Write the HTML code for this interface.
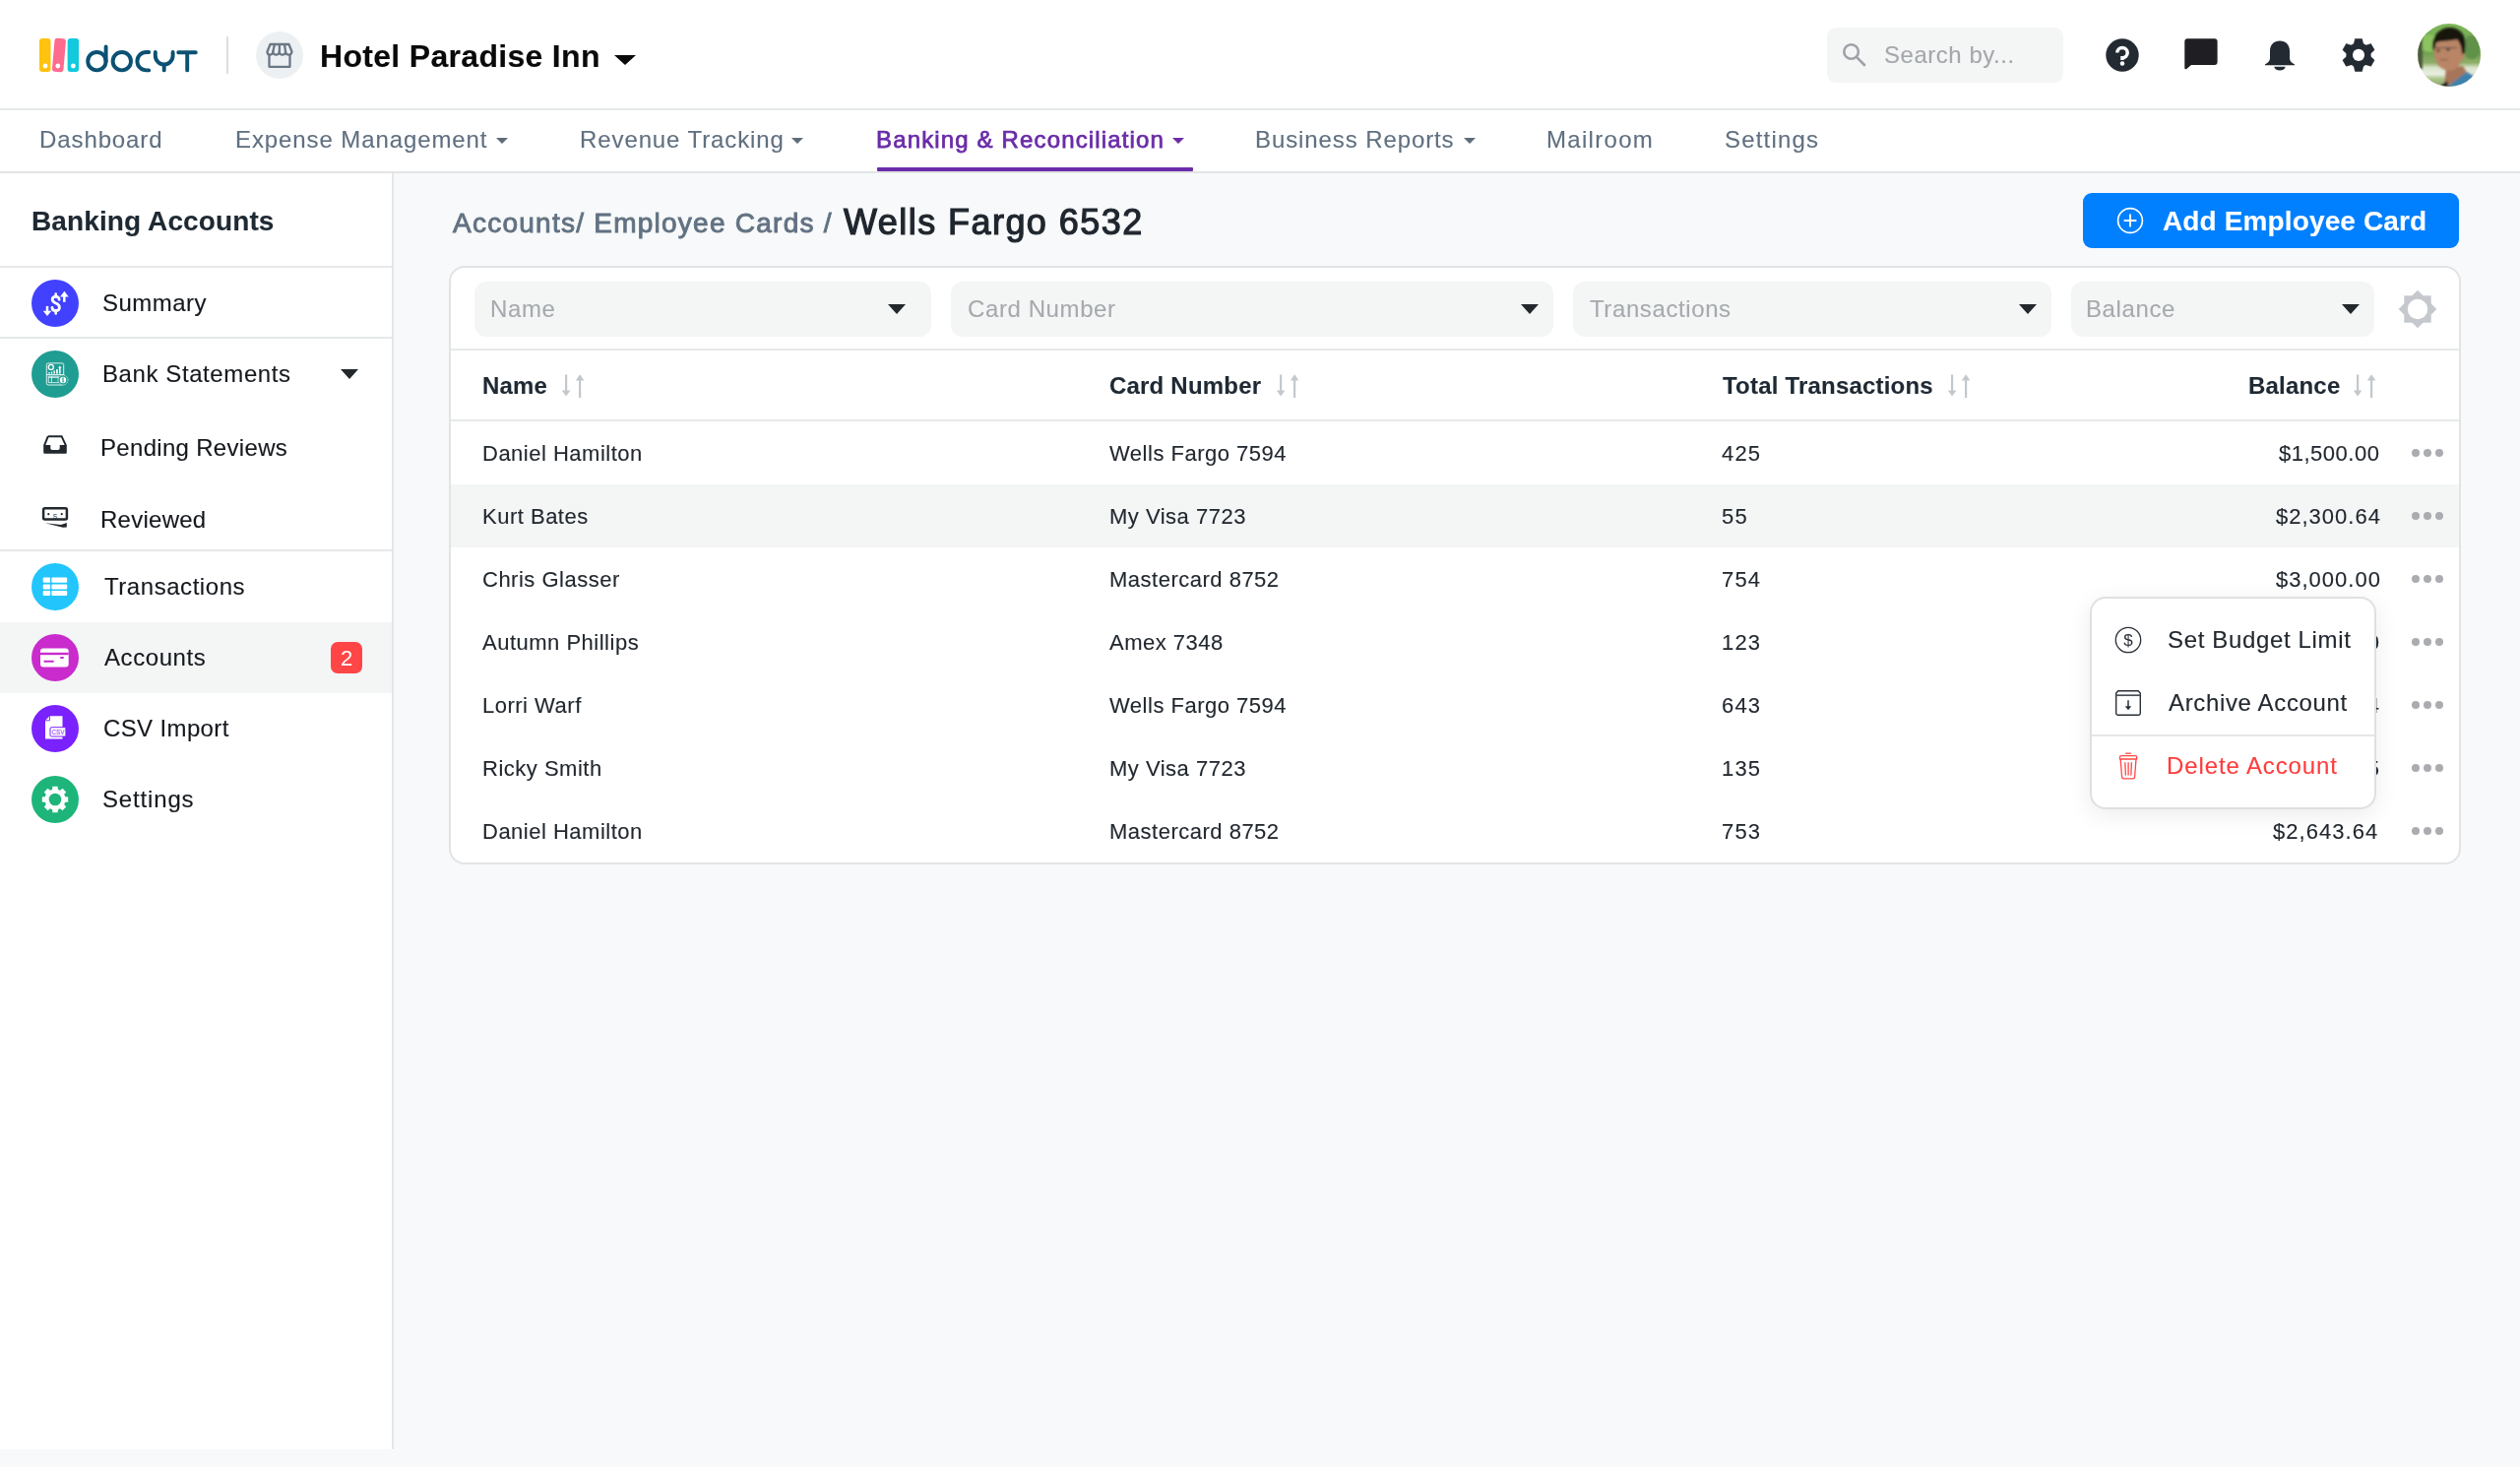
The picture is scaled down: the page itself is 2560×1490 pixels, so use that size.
<!DOCTYPE html>
<html><head><meta charset="utf-8"><title>Docyt</title>
<style>
*{box-sizing:border-box;margin:0;padding:0}
html,body{width:2560px;height:1490px;overflow:hidden;background:#f7f9fa;font-family:"Liberation Sans",sans-serif;position:relative}
.a{position:absolute}
.t{position:absolute;white-space:nowrap;line-height:1;-webkit-text-stroke-width:0.12px;will-change:transform}
svg{display:block}
/* header */
#hdr{left:0;top:0;width:2560px;height:112px;background:#fff;border-bottom:2px solid #e6e8ea}
#nav{left:0;top:112px;width:2560px;height:64px;background:#fff;border-bottom:2px solid #e2e4e6}
.nv{font-size:24px;color:#607080;letter-spacing:0.9px}
.car{position:absolute;width:0;height:0;border-left:6.5px solid transparent;border-right:6.5px solid transparent;border-top:6px solid #5d6c7a}
#side{left:0;top:176px;width:400px;height:1296px;background:#fff;border-right:2px solid #e4e6e8}
.sep{position:absolute;left:0;width:398px;height:2px;background:#e6e8ea}
.si{font-size:24px;color:#15191e;letter-spacing:0.45px}
.circ{position:absolute;width:48px;height:48px;border-radius:50%;left:32px}
.ph{font-size:24px;color:#a6aaae;letter-spacing:0.6px}
.tri{position:absolute;top:308.5px;width:0;height:0;border-left:9px solid transparent;border-right:9px solid transparent;border-top:10.5px solid #23282d}
.th{font-size:24px;font-weight:700;color:#1e2933;letter-spacing:0.2px}
.td{font-size:22px;color:#22282f;letter-spacing:0.5px}
.dot{position:absolute;width:8px;height:8px;border-radius:50%;background:#aaacb0}
.mi{font-size:24px;color:#22282f;letter-spacing:0.65px}
</style></head>
<body>
<!-- HEADER -->
<div id="hdr" class="a"></div>
<svg class="a" style="left:38px;top:36px" width="166" height="42" viewBox="38 36 166 42">
  <rect x="40" y="39" width="11.5" height="34" rx="3" fill="#ffc20e"/>
  <rect x="54.2" y="39" width="11.5" height="34" rx="3" fill="#ff6a8f" transform="rotate(5 60 56)"/>
  <rect x="68.6" y="39" width="11.5" height="34" rx="3" fill="#12c9dd"/>
  <circle cx="46" cy="67" r="2.4" fill="#fff"/><circle cx="58.8" cy="67" r="2.4" fill="#fff"/><circle cx="74.4" cy="67" r="2.4" fill="#fff"/>
  <g fill="none" stroke="#0b5173" stroke-width="3.9" stroke-linecap="round">
    <circle cx="98.4" cy="62.2" r="9.2"/><path d="M107.6 47.5V62.2"/>
    <circle cx="123.8" cy="62.2" r="9.2"/>
    <path d="M151.2 53H148.6A9.2 9.2 0 0 0 148.6 71.4H151.2"/>
    <path d="M157.8 53V56.5A8.9 8.9 0 0 0 175.6 56.5V53M166.7 65.4V71.4"/>
    <path d="M181.2 53.2H198.8M190.2 53.2V71.4"/>
  </g>
</svg>
<div class="a" style="left:230px;top:37px;width:2px;height:38px;background:#dcdfe2"></div>
<div class="a" style="left:260px;top:32px;width:48px;height:48px;border-radius:50%;background:#edf0f3"></div>
<svg class="a" style="left:268px;top:41px" width="32" height="30" viewBox="0 0 32 30">
  <g fill="none" stroke="#6b7785" stroke-width="2.3" stroke-linejoin="round">
    <path d="M6.5 4H25.5L28.5 11.5C28.5 13.5 26.8 14.6 25.3 14.6S22.1 13.5 22.1 11.5C22.1 13.5 20.4 14.6 18.9 14.6S15.7 13.5 15.7 11.5C15.7 13.5 14 14.6 12.5 14.6S9.3 13.5 9.3 11.5C9.3 13.5 7.6 14.6 6.1 14.6S3.5 13.5 3.5 11.5Z"/>
    <path d="M11 4L9.3 11.5M15.9 4V11.5M21 4L22.1 11.5"/>
    <path d="M5.5 14.5V26.8H26.5V14.5"/>
  </g>
</svg>
<div class="t" style="left:325.4px;top:40.7px;font-size:32px;font-weight:700;color:#0a0a0a;letter-spacing:0.31px">Hotel Paradise Inn</div>
<div class="a" style="left:624px;top:56px;width:0;height:0;border-left:11px solid transparent;border-right:11px solid transparent;border-top:10px solid #0a0a0a"></div>

<!-- search -->
<div class="a" style="left:1856px;top:28px;width:240px;height:56px;border-radius:9px;background:#f4f6f6"></div>
<svg class="a" style="left:1870px;top:42px" width="28" height="28" viewBox="0 0 28 28">
  <circle cx="10.6" cy="10.5" r="7.3" fill="none" stroke="#9ea3a8" stroke-width="2.6"/>
  <path d="M15.9 15.9L24 24" stroke="#9ea3a8" stroke-width="2.7" stroke-linecap="round"/>
</svg>
<div class="t" style="left:1914px;top:44px;font-size:24px;color:#a4a8ac;letter-spacing:0.53px">Search by...</div>

<!-- header icons -->
<svg class="a" style="left:2139px;top:39px" width="34" height="34" viewBox="0 0 34 34">
  <circle cx="17" cy="17" r="16.7" fill="#232a32"/>
  <path d="M11.8 14.6A5.2 5.2 0 1 1 17 19.8V21.9" fill="none" stroke="#fff" stroke-width="3.5"/>
  <circle cx="17" cy="25.5" r="2.25" fill="#fff"/>
</svg>
<svg class="a" style="left:2219px;top:39px" width="34" height="32" viewBox="0 0 34 32">
  <path d="M3 0.3H30.6A3 3 0 0 1 33.6 3.3V24.1A3 3 0 0 1 30.6 27.1H7L2.3 31A1.2 1.2 0 0 1 0.3 30.1V3.3A3 3 0 0 1 3 0.3Z" fill="#1f1f23"/>
</svg>
<svg class="a" style="left:2300px;top:40.5px" width="32" height="31" viewBox="0 0 32 31">
  <path d="M1 25.3H31V24.3C28.2 23.3 26.4 21.5 26 18.6V10.8C26 4.7 21.9 0.6 16 0.6C10.1 0.6 6 4.7 6 10.8V18.6C5.6 21.5 3.8 23.3 1 24.3Z" fill="#232a32"/>
  <path d="M10.4 26.8H21.6A5.6 3.7 0 0 1 10.4 26.8Z" fill="#232a32"/>
</svg>
<svg class="a" style="left:2379px;top:39px" width="34" height="34" viewBox="-17 -16.9 34 34">
  <g fill="#232a32" stroke="#232a32" stroke-width="0.6" stroke-linejoin="round">
    <path id="gt" d="M-3.5 -16.5H3.5L4.9 -10.5H-4.9Z"/>
    <use href="#gt" transform="rotate(60)"/><use href="#gt" transform="rotate(120)"/><use href="#gt" transform="rotate(180)"/><use href="#gt" transform="rotate(240)"/><use href="#gt" transform="rotate(300)"/>
    <circle r="12.3"/>
  </g>
  <circle r="6.05" fill="#fff"/>
</svg>
<!-- avatar -->
<svg class="a" style="left:2456px;top:24px" width="64" height="64" viewBox="0 0 64 64">
  <defs><clipPath id="av"><circle cx="32" cy="32" r="32"/></clipPath>
  <filter id="bl" x="-10%" y="-10%" width="120%" height="120%"><feGaussianBlur stdDeviation="0.9"/></filter>
  <linearGradient id="avbg" x1="0" y1="0" x2="0" y2="1"><stop offset="0" stop-color="#7fb85a"/><stop offset="0.45" stop-color="#6d9f4e"/><stop offset="0.62" stop-color="#8fae6a"/><stop offset="0.7" stop-color="#d9e4cc"/><stop offset="0.8" stop-color="#e8eee0"/><stop offset="0.88" stop-color="#a9c48a"/><stop offset="1" stop-color="#8a9f70"/></linearGradient></defs>
  <g clip-path="url(#av)">
    <rect width="64" height="64" fill="url(#avbg)"/>
    <g filter="url(#bl)">
    <ellipse cx="12" cy="20" rx="10" ry="9" fill="#8cc25e"/>
    <ellipse cx="55" cy="24" rx="9" ry="12" fill="#5f9148"/>
    <rect x="0" y="14" width="5" height="32" fill="#4d5a3e"/>
    <path d="M50 64L56 50L64 52V64Z" fill="#cfdcc0"/>
    <path d="M27 64L29 44L46 43L51 51L56 57L50 64Z" fill="#a7765a"/>
    <path d="M30 64L50 49L60 55L58 64Z" fill="#3d82ad"/>
    <path d="M23 64L30 58L31 64Z" fill="#1d1d1f"/>
    <path d="M16 17C15.5 30 17 37 21 42C24 46 28 47.5 32 47.5C38 47.5 42 44 44 38L48 34L48 25L44 18L40 13Z" fill="#b98566"/>
    <path d="M15 25C14 14 21 5 31 4C41 3 49 10 48.5 21L48 30L45 31C45 24 43 19 40 16C34 18 25 17 19 19L16.5 28Z" fill="#17130f"/>
    <path d="M16 24.5H40" stroke="#4b4540" stroke-width="1"/>
    <ellipse cx="21" cy="27.5" rx="2" ry="1" fill="#3a2a22"/><ellipse cx="31" cy="26.5" rx="2" ry="1" fill="#3a2a22"/>
    <path d="M23 36C25 37 28 37 31 36" stroke="#8a5a48" stroke-width="1.2" fill="none"/>
    </g>
  </g>
</svg>

<!-- NAV -->
<div id="nav" class="a"></div>
<div class="t nv" style="left:39.7px;top:129.7px">Dashboard</div>
<div class="t nv" style="left:238.5px;top:129.7px">Expense Management</div>
<div class="car" style="left:504px;top:140px"></div>
<div class="t nv" style="left:588.5px;top:129.7px">Revenue Tracking</div>
<div class="car" style="left:804px;top:140px"></div>
<div class="t nv" style="left:889.5px;top:129.7px;color:#6a2ca8;font-weight:400;-webkit-text-stroke:0.75px #6a2ca8;letter-spacing:1.15px">Banking &amp; Reconciliation</div>
<div class="car" style="left:1191px;top:140px;border-top-color:#6a2ca8"></div>
<div class="a" style="left:891px;top:170px;width:321px;height:4px;background:#6a2ca8;border-radius:1px"></div>
<div class="t nv" style="left:1274.7px;top:129.7px">Business Reports</div>
<div class="car" style="left:1487px;top:140px"></div>
<div class="t nv" style="left:1570.5px;top:129.7px;letter-spacing:1.3px">Mailroom</div>
<div class="t nv" style="left:1751.5px;top:129.7px;letter-spacing:1.2px">Settings</div>

<!-- SIDEBAR -->
<div id="side" class="a"></div>
<div class="t" style="left:32px;top:211px;font-size:28px;font-weight:700;color:#1e2933;letter-spacing:0.11px">Banking Accounts</div>
<div class="sep" style="top:270px"></div>
<div class="circ" style="top:284px;background:#4141ff"></div>
<svg class="a" style="left:32px;top:284px" width="48" height="48" viewBox="0 0 48 48">
  <path d="M28.1 20.3C28.1 18.5 26.6 17.2 24.7 17.2C22.6 17.2 21.2 18.5 21.2 20.3C21.2 22.4 23.1 23.3 24.8 24C26.7 24.8 28.4 25.7 28.4 28.2C28.4 30.3 26.8 31.6 24.7 31.6C22.5 31.6 21 30.4 21 28.5" fill="none" stroke="#fff" stroke-width="2.8" stroke-linecap="round"/>
  <path d="M24.7 14.6V17.5M24.7 31.4V34.4" stroke="#fff" stroke-width="2.6" stroke-linecap="round"/>
  <path d="M33.3 22.8V16.5" stroke="#fff" stroke-width="2.5"/><path d="M29.1 17.4H37.7L33.4 11.7Z" fill="#fff"/>
  <path d="M16 26.9V32.5" stroke="#fff" stroke-width="2.5"/><path d="M11.7 31.8H20.3L16 37.1Z" fill="#fff"/>
</svg>
<div class="t si" style="left:104px;top:296.4px">Summary</div>
<div class="sep" style="top:342px"></div>
<div class="circ" style="top:356px;background:#1f9d92"></div>
<svg class="a" style="left:32px;top:356px" width="48" height="48" viewBox="0 0 48 48">
  <g fill="none" stroke="#fff" stroke-width="1">
    <rect x="15.3" y="12.9" width="17.4" height="22.1" rx="1.6" stroke-opacity="0.85"/>
    <path d="M15.3 24.6H32.7" stroke-opacity="0.9"/>
    <rect x="17.3" y="26.2" width="10" height="6.4" stroke-opacity="0.75"/>
    <path d="M20.4 26.2V32.6M17.3 27.4H27.3" stroke-opacity="0.75"/>
  </g>
  <circle cx="19.8" cy="16.9" r="2.5" fill="none" stroke="#fff" stroke-width="1.3"/>
  <g fill="#fff">
    <rect x="17.2" y="22.2" width="1.6" height="1.4"/><rect x="19.9" y="21.6" width="1.3" height="2"/><rect x="22.4" y="20.4" width="1.4" height="3.2"/><rect x="25.1" y="19.1" width="1.7" height="4.5"/><rect x="28" y="17.2" width="1.6" height="6.4"/>
    <path d="M28.8 15.6L27 17.8H30.6Z"/>
  </g>
  <circle cx="32" cy="30" r="5" fill="#1f9d92" stroke="#fff" stroke-width="0.9" stroke-dasharray="1.2 0.8" stroke-opacity="0.8"/>
  <circle cx="32" cy="30" r="3.2" fill="#fff"/>
  <path d="M33 28.5C32.5 27.9 31 27.9 31 28.9C31 30 33 29.8 33 31C33 32 31.5 32 31 31.4M32 27.4V32.6" fill="none" stroke="#1f9d92" stroke-width="0.7"/>
</svg>
<div class="t si" style="left:104px;top:367.7px;letter-spacing:0.59px">Bank Statements</div>
<div class="a" style="left:346px;top:375px;width:0;height:0;border-left:9.8px solid transparent;border-right:9.8px solid transparent;border-top:10.5px solid #23282d"></div>
<svg class="a" style="left:40px;top:438px" width="32" height="28" viewBox="40 438 32 28">
  <path d="M48.8 443.2H62.6L67 452.6" fill="none" stroke="#22282e" stroke-width="2"/>
  <path d="M48.8 443.2L45 452.6" fill="none" stroke="#22282e" stroke-width="2"/>
  <path d="M44.2 452H51.3V455.2Q51.3 457 53 457H59Q60.7 457 60.7 455.2V452H67.8V459.6Q67.8 460.8 66.6 460.8H45.4Q44.2 460.8 44.2 459.6Z" fill="#22282e"/>
</svg>
<div class="t si" style="left:102px;top:442.7px;letter-spacing:0.31px">Pending Reviews</div>
<svg class="a" style="left:40px;top:512px" width="32" height="28" viewBox="40 512 32 28">
  <rect x="44.1" y="516.3" width="23.8" height="11.3" rx="1.5" fill="none" stroke="#22282e" stroke-width="2.5"/>
  <circle cx="49.3" cy="522.2" r="1.1" fill="#22282e"/><circle cx="62.7" cy="522.2" r="1.1" fill="#22282e"/>
  <text x="56" y="527.2" font-family="Liberation Sans" font-size="6.5" fill="#22282e" text-anchor="middle">S</text>
  <path d="M45.8 531.3L62 533L67.8 531V535.5L64 535.7Z" fill="#22282e"/>
</svg>
<div class="t si" style="left:102px;top:515.7px;letter-spacing:0.26px">Reviewed</div>
<div class="sep" style="top:558px"></div>
<div class="circ" style="top:572px;background:#22c6fd"></div>
<svg class="a" style="left:32px;top:572px" width="48" height="48" viewBox="32 572 48 48">
  <g fill="#fff">
    <rect x="43.7" y="586.5" width="7.4" height="5.2" rx="1"/><rect x="52.4" y="586.5" width="15.8" height="5.2" rx="1"/>
    <rect x="43.7" y="593.4" width="7.4" height="5" rx="1"/><rect x="52.4" y="593.4" width="15.8" height="5" rx="1"/>
    <rect x="43.7" y="600" width="7.4" height="5" rx="1"/><rect x="52.4" y="600" width="15.8" height="5" rx="1"/>
  </g>
</svg>
<div class="t si" style="left:105.8px;top:583.7px;letter-spacing:0.55px">Transactions</div>
<div class="a" style="left:0;top:632px;width:398px;height:72px;background:#f4f6f6"></div>
<div class="circ" style="top:644px;background:#c92bcc"></div>
<svg class="a" style="left:32px;top:644px" width="48" height="48" viewBox="32 644 48 48">
  <rect x="41" y="658.4" width="28.7" height="19" rx="3" fill="#fff"/>
  <rect x="41" y="662.8" width="28.7" height="2.4" fill="#c92bcc"/>
  <rect x="44.3" y="670.7" width="10.6" height="2" rx="1" fill="#c92bcc"/>
  <rect x="61" y="667" width="4" height="2" rx="1" fill="#c92bcc"/>
</svg>
<div class="t si" style="left:105.8px;top:655.7px;letter-spacing:0.58px">Accounts</div>
<div class="a" style="left:336px;top:652px;width:32px;height:32px;border-radius:7px;background:#ff4646"></div>
<div class="t" style="left:336px;top:657.6px;width:32px;text-align:center;font-size:22px;color:#fff;-webkit-text-stroke-width:0">2</div>
<div class="circ" style="top:716px;background:#7a22fd"></div>
<svg class="a" style="left:32px;top:716px" width="48" height="48" viewBox="32 716 48 48">
  <path d="M50.5 727.3H63.5V750.4H46V731.8Z" fill="#fff"/>
  <path d="M46 731.8H50.5V727.3" fill="none" stroke="#7a22fd" stroke-width="0.9"/>
  <rect x="51" y="738.7" width="15.9" height="9.3" rx="1.2" fill="#fff" stroke="#7a22fd" stroke-width="1"/>
  <text x="58.9" y="746" font-family="Liberation Sans" font-size="6.3" fill="#7a22fd" text-anchor="middle">CSV</text>
</svg>
<div class="t si" style="left:104.8px;top:727.7px;letter-spacing:0.37px">CSV Import</div>
<div class="circ" style="top:788px;background:#1db57a"></div>
<svg class="a" style="left:32px;top:788px" width="48" height="48" viewBox="-24 -24 48 48">
  <g fill="#fff">
    <path id="st" d="M-2.6 -13.2H2.6L3.1 -9H-3.1Z"/>
    <use href="#st" transform="rotate(45)"/><use href="#st" transform="rotate(90)"/><use href="#st" transform="rotate(135)"/><use href="#st" transform="rotate(180)"/><use href="#st" transform="rotate(225)"/><use href="#st" transform="rotate(270)"/><use href="#st" transform="rotate(315)"/>
    <circle r="10.5"/>
  </g>
  <circle r="6.3" fill="#1db57a"/>
</svg>
<div class="t si" style="left:104.3px;top:799.7px;letter-spacing:0.84px">Settings</div>


<!-- MAIN -->
<div class="t" style="left:460px;top:213.2px;font-size:28px;font-weight:400;-webkit-text-stroke:0.9px #627282;color:#627282;letter-spacing:1.25px">Accounts/ Employee Cards /</div>
<div class="t" style="left:856.8px;top:208.4px;font-size:36px;font-weight:400;-webkit-text-stroke:1.2px #1f262e;color:#1f262e;letter-spacing:1.45px">Wells Fargo 6532</div>
<div class="a" style="left:2116px;top:196px;width:382px;height:56px;border-radius:9px;background:#0080ff"></div>
<svg class="a" style="left:2150px;top:210px" width="28" height="28" viewBox="0 0 28 28">
  <circle cx="14" cy="14" r="12.4" fill="none" stroke="#fff" stroke-width="1.7"/>
  <path d="M14 7.6V20.4M7.6 14H20.4" stroke="#fff" stroke-width="1.8"/>
</svg>
<div class="t" style="left:2196.8px;top:210.7px;font-size:28px;font-weight:700;color:#fff;letter-spacing:0.13px">Add Employee Card</div>

<!-- card -->
<div class="a" style="left:456px;top:270px;width:2044px;height:608px;border:2px solid #e1e3e5;border-radius:16px;background:#fff"></div>
<div class="a" style="left:482px;top:286px;width:464px;height:56px;border-radius:12px;background:#f4f6f6"></div>
<div class="a" style="left:966px;top:286px;width:612px;height:56px;border-radius:12px;background:#f4f6f6"></div>
<div class="a" style="left:1598px;top:286px;width:486px;height:56px;border-radius:12px;background:#f4f6f6"></div>
<div class="a" style="left:2104px;top:286px;width:308px;height:56px;border-radius:12px;background:#f4f6f6"></div>
<div class="t ph" style="left:497.6px;top:301.9px">Name</div>
<div class="t ph" style="left:982.7px;top:301.9px">Card Number</div>
<div class="t ph" style="left:1614.9px;top:301.9px">Transactions</div>
<div class="t ph" style="left:2119.4px;top:301.9px">Balance</div>
<div class="tri" style="left:901.5px"></div>
<div class="tri" style="left:1545px"></div>
<div class="tri" style="left:2051px"></div>
<div class="tri" style="left:2379px"></div>
<svg class="a" style="left:2436px;top:294px" width="40" height="40" viewBox="-20 -20 40 40">
  <g fill="#c5c9cd"><rect x="-13.7" y="-13.7" width="27.4" height="27.4"/><rect x="-13.7" y="-13.7" width="27.4" height="27.4" transform="rotate(45)"/></g>
  <circle r="10.2" fill="#fff"/>
</svg>
<div class="a" style="left:458px;top:354px;width:2040px;height:2px;background:#e6e8ea"></div>
<div class="t th" style="left:490px;top:380.1px">Name</div>
<div class="t th" style="left:1126.8px;top:380.1px">Card Number</div>
<div class="t th" style="left:1749.8px;top:380.1px">Total Transactions</div>
<div class="t th" style="left:2284px;top:380.1px">Balance</div>
<svg class="a" style="left:570px;top:379px" width="26" height="26" viewBox="0 0 26 26"><g fill="#c3c8cd"><rect x="4" y="1.5" width="2.2" height="19"/><path d="M0.8 17.5H9.4L5.1 23.5Z"/><rect x="18" y="4.5" width="2.2" height="20.5"/><path d="M14.8 7.5H23.4L19.1 1.2Z"/></g></svg>
<svg class="a" style="left:1296px;top:379px" width="26" height="26" viewBox="0 0 26 26"><g fill="#c3c8cd"><rect x="4" y="1.5" width="2.2" height="19"/><path d="M0.8 17.5H9.4L5.1 23.5Z"/><rect x="18" y="4.5" width="2.2" height="20.5"/><path d="M14.8 7.5H23.4L19.1 1.2Z"/></g></svg>
<svg class="a" style="left:1978px;top:379px" width="26" height="26" viewBox="0 0 26 26"><g fill="#c3c8cd"><rect x="4" y="1.5" width="2.2" height="19"/><path d="M0.8 17.5H9.4L5.1 23.5Z"/><rect x="18" y="4.5" width="2.2" height="20.5"/><path d="M14.8 7.5H23.4L19.1 1.2Z"/></g></svg>
<svg class="a" style="left:2390px;top:379px" width="26" height="26" viewBox="0 0 26 26"><g fill="#c3c8cd"><rect x="4" y="1.5" width="2.2" height="19"/><path d="M0.8 17.5H9.4L5.1 23.5Z"/><rect x="18" y="4.5" width="2.2" height="20.5"/><path d="M14.8 7.5H23.4L19.1 1.2Z"/></g></svg>
<div class="a" style="left:458px;top:426px;width:2040px;height:2px;background:#e6e8ea"></div>
<div class="a" style="left:458px;top:492px;width:2040px;height:64px;background:#f4f6f6"></div>
<div class="t td" style="left:490px;top:450.0px">Daniel Hamilton</div>
<div class="t td" style="left:1127px;top:450.0px">Wells Fargo 7594</div>
<div class="t td" style="left:1748.5px;letter-spacing:1.2px;top:450.0px">425</div>
<div class="t td" style="right:142.5px;top:450.0px">$1,500.00</div>
<div class="dot" style="left:2449.7px;top:456.2px"></div>
<div class="dot" style="left:2461.7px;top:456.2px"></div>
<div class="dot" style="left:2473.7px;top:456.2px"></div>
<div class="t td" style="left:490px;top:514.0px">Kurt Bates</div>
<div class="t td" style="left:1127px;top:514.0px">My Visa 7723</div>
<div class="t td" style="left:1748.5px;letter-spacing:1.2px;top:514.0px">55</div>
<div class="t td" style="right:141.5px;letter-spacing:1.0px;top:514.0px">$2,300.64</div>
<div class="dot" style="left:2449.7px;top:520.2px"></div>
<div class="dot" style="left:2461.7px;top:520.2px"></div>
<div class="dot" style="left:2473.7px;top:520.2px"></div>
<div class="t td" style="left:490px;top:578.0px">Chris Glasser</div>
<div class="t td" style="left:1127px;top:578.0px">Mastercard 8752</div>
<div class="t td" style="left:1748.5px;letter-spacing:1.2px;top:578.0px">754</div>
<div class="t td" style="right:141.5px;letter-spacing:1.0px;top:578.0px">$3,000.00</div>
<div class="dot" style="left:2449.7px;top:584.2px"></div>
<div class="dot" style="left:2461.7px;top:584.2px"></div>
<div class="dot" style="left:2473.7px;top:584.2px"></div>
<div class="t td" style="left:490px;top:642.0px">Autumn Phillips</div>
<div class="t td" style="left:1127px;top:642.0px">Amex 7348</div>
<div class="t td" style="left:1748.5px;letter-spacing:1.2px;top:642.0px">123</div>
<div class="t td" style="right:142.5px;top:642.0px">$1,250.00</div>
<div class="dot" style="left:2449.7px;top:648.2px"></div>
<div class="dot" style="left:2461.7px;top:648.2px"></div>
<div class="dot" style="left:2473.7px;top:648.2px"></div>
<div class="t td" style="left:490px;top:706.0px">Lorri Warf</div>
<div class="t td" style="left:1127px;top:706.0px">Wells Fargo 7594</div>
<div class="t td" style="left:1748.5px;letter-spacing:1.2px;top:706.0px">643</div>
<div class="t td" style="right:142.5px;top:706.0px">$2,520.64</div>
<div class="dot" style="left:2449.7px;top:712.2px"></div>
<div class="dot" style="left:2461.7px;top:712.2px"></div>
<div class="dot" style="left:2473.7px;top:712.2px"></div>
<div class="t td" style="left:490px;top:770.0px">Ricky Smith</div>
<div class="t td" style="left:1127px;top:770.0px">My Visa 7723</div>
<div class="t td" style="left:1748.5px;letter-spacing:1.2px;top:770.0px">135</div>
<div class="t td" style="right:142.5px;top:770.0px">$1,845.35</div>
<div class="dot" style="left:2449.7px;top:776.2px"></div>
<div class="dot" style="left:2461.7px;top:776.2px"></div>
<div class="dot" style="left:2473.7px;top:776.2px"></div>
<div class="t td" style="left:490px;top:834.0px">Daniel Hamilton</div>
<div class="t td" style="left:1127px;top:834.0px">Mastercard 8752</div>
<div class="t td" style="left:1748.5px;letter-spacing:1.2px;top:834.0px">753</div>
<div class="t td" style="right:143.2px;letter-spacing:1.05px;top:834.0px">$2,643.64</div>
<div class="dot" style="left:2449.7px;top:840.2px"></div>
<div class="dot" style="left:2461.7px;top:840.2px"></div>
<div class="dot" style="left:2473.7px;top:840.2px"></div>
<div class="a" style="left:2123px;top:606px;width:291px;height:216px;border:2px solid #dfe0e2;border-radius:16px;background:#fff;box-shadow:0 6px 24px rgba(0,0,0,0.08)"></div>
<svg class="a" style="left:2146px;top:634px" width="32" height="32" viewBox="2146 634 32 32">
  <circle cx="2162" cy="650" r="12.7" fill="none" stroke="#2a3038" stroke-width="1.3"/>
  <text x="2162" y="656.3" font-family="Liberation Sans" font-size="17" fill="#2a3038" text-anchor="middle">$</text>
</svg>
<div class="t mi" style="left:2201.5px;top:637.7px">Set Budget Limit</div>
<svg class="a" style="left:2146px;top:698px" width="32" height="32" viewBox="2146 698 32 32">
  <path d="M2151.8 701.7H2172.2L2174.3 704V724.6Q2174.3 726.3 2172.6 726.3H2151.4Q2149.7 726.3 2149.7 724.6V704Z" fill="none" stroke="#2a3038" stroke-width="1.4"/>
  <path d="M2149.7 706.2H2174.3" stroke="#4a5058" stroke-width="1.7"/>
  <path d="M2162 711.3V719.5" stroke="#2a3038" stroke-width="1.5"/>
  <path d="M2158.8 717.2L2162 721.2L2165.2 717.2Z" fill="#2a3038"/>
</svg>
<div class="t mi" style="left:2202.5px;top:701.7px">Archive Account</div>
<div class="a" style="left:2125px;top:746px;width:287px;height:2px;background:#e4e6e8"></div>
<svg class="a" style="left:2148px;top:762px" width="28" height="32" viewBox="2148 762 28 32">
  <g fill="none" stroke="#ff4646" stroke-width="1.3" stroke-linejoin="round">
    <path d="M2159.2 765.2H2164.8"/>
    <path d="M2153.5 771V769Q2153.5 767.6 2155 767.6H2169.2Q2170.7 767.6 2170.7 769V771Z"/>
    <path d="M2154.2 771L2155.6 789.2Q2155.8 790.8 2157.4 790.8H2166.8Q2168.4 790.8 2168.6 789.2L2170 771"/>
    <path d="M2158.8 774.3L2159.4 787.6M2162.1 774.3V787.6M2165.4 774.3L2164.8 787.6"/>
  </g>
</svg>
<div class="t mi" style="left:2200.5px;top:765.7px;color:#ff3c3c;letter-spacing:0.88px">Delete Account</div>



</body></html>
